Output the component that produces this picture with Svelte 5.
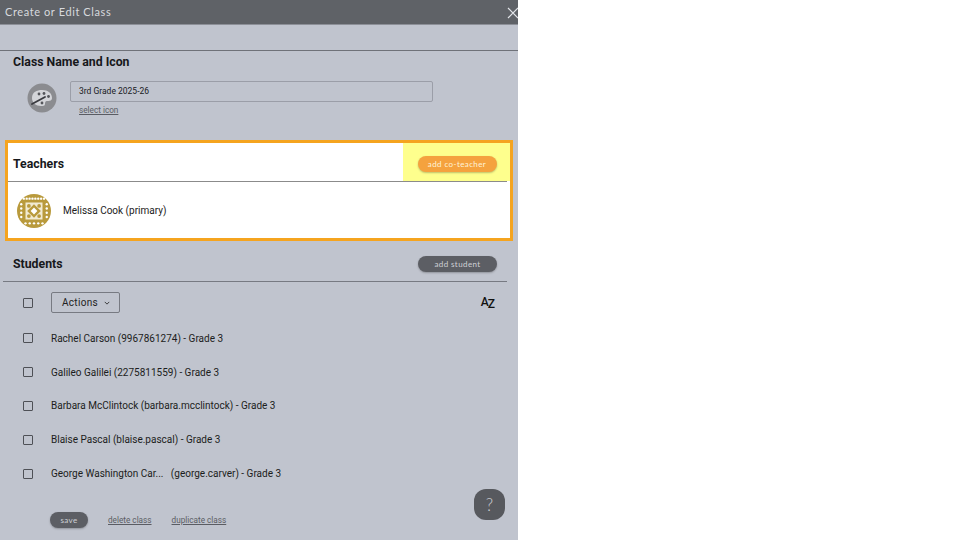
<script>
	const students = [
		'Rachel Carson (9967861274) - Grade 3',
		'Galileo Galilei (2275811559) - Grade 3',
		'Barbara McClintock (barbara.mcclintock) - Grade 3',
		'Blaise Pascal (blaise.pascal) - Grade 3',
		'George Washington Car...\u00a0\u00a0 (george.carver) - Grade 3'
	];

	// teacher avatar pattern: lattice in the middle, dots round it
	const cells = [];
	for (const y of [14, 26]) {
		for (const x of [14, 26]) cells.push({ x, y });
	}
	const dots = [];
	for (let x = 8; x <= 32; x += 3.4) {
		dots.push({ x, y: 5.5 });
	}
	for (const y of [12, 17, 22, 27]) {
		dots.push({ x: 5, y }, { x: 35, y });
	}
	for (let x = 10; x <= 30; x += 5) {
		dots.push({ x, y: 34.5 });
	}
</script>

<div class="panel">
	<header class="titlebar">
		<span class="title">Create or Edit Class</span>
		<svg class="close" viewBox="0 0 12 12" width="12" height="12">
			<path d="M1 1 L11 11 M11 1 L1 11" stroke="#e4e6ea" stroke-width="1.2" fill="none" />
		</svg>
	</header>

	<div class="tabs"></div>

	<section class="name-section">
		<h2>Class Name and Icon</h2>
		<div class="name-row">
			<div class="icon-circle">
				<svg viewBox="0 0 30 30" width="30" height="30">
					<circle cx="15" cy="15" r="14.5" fill="#8b8c90" />
					<path d="M5 15 C5 9 10 7 15 7 C21 7 25 10 25 15 C25 18 22 18 20 18 C18 18 18 20 18 21 C18 23 16 23 14 23 C9 23 5 20 5 15 Z" fill="#d4d5d9" />
					<circle cx="12" cy="11" r="1.4" fill="#55565b" />
					<circle cx="17" cy="10.5" r="1.4" fill="#55565b" />
					<circle cx="21.5" cy="13.5" r="1.4" fill="#55565b" />
					<circle cx="15" cy="20" r="1.4" fill="#55565b" />
					<path d="M5 21 L18 14" stroke="#3a3b40" stroke-width="1.8" stroke-linecap="round" />
				</svg>
			</div>
			<div class="name-fields">
				<div class="name-input">3rd Grade 2025-26</div>
				<span class="link">select icon</span>
			</div>
		</div>
	</section>

	<section class="teachers">
		<div class="teachers-head">
			<h2>Teachers</h2>
			<div class="spot">
				<button class="pill orange">add co-teacher</button>
			</div>
		</div>
		<div class="teacher-row">
			<svg class="avatar" viewBox="0 0 40 40" width="34" height="34">
				<circle cx="20" cy="20" r="20" fill="#b99a3c" />
				<rect x="10" y="10" width="20" height="20" fill="#f1ead2" />
				<path d="M20 12 L28 20 L20 28 L12 20 Z" fill="#b99a3c" />
				<path d="M20 16 L24 20 L20 24 L16 20 Z" fill="#fff" />
				{#each cells as c}
					<circle cx={c.x} cy={c.y} r="2.2" fill="#b99a3c" />
				{/each}
				{#each dots as d}
					<circle cx={d.x} cy={d.y} r="1.4" fill="#fff" />
				{/each}
			</svg>
			<span>Melissa Cook (primary)</span>
		</div>
	</section>

	<section class="students">
		<div class="students-head">
			<h2>Students</h2>
			<button class="pill dark">add student</button>
		</div>

		<div class="actions-row">
			<span class="check"></span>
			<button class="actions">
				Actions
				<svg viewBox="0 0 8 5" width="6" height="4">
					<path d="M1 1 L4 4 L7 1" stroke="#222" stroke-width="1.1" fill="none" />
				</svg>
			</button>
			<span class="sort"><span class="sort-a">A</span><span class="sort-z">Z</span></span>
		</div>

		<ul class="student-list">
			{#each students as name}
				<li>
					<span class="check"></span>
					<span>{name}</span>
				</li>
			{/each}
		</ul>
	</section>

	<footer class="actions-foot">
		<button class="pill dark save">save</button>
		<span class="link">delete class</span>
		<span class="link">duplicate class</span>
	</footer>

	<div class="help">?</div>
</div>

<style>
	:global(body) {
		margin: 0;
		background: #fff;
	}

	.panel {
		position: relative;
		width: 518px;
		height: 540px;
		overflow: hidden;
		background: #c0c4ce;
		font-family: Roboto, 'Liberation Sans', sans-serif;
		color: #1c1d20;
		font-size: 10px;
	}

	h2 {
		margin: 0;
		font-size: 12.3px;
		font-weight: 700;
		color: #17181b;
	}

	.titlebar {
		display: flex;
		align-items: center;
		justify-content: space-between;
		height: 24px;
		padding: 0 0 0 5px;
		background: #5f6267;
		border-bottom: 1px solid #8d9098;
	}

	.title {
		margin-top: -2px;
		font-family: Lato, sans-serif;
		font-size: 11px;
		letter-spacing: 0.6px;
		color: #d8dade;
	}

	.close {
		margin-right: -1px;
		margin-top: 2px;
	}

	.tabs {
		height: 25px;
		border-bottom: 1px solid #6f7279;
	}

	.name-section {
		box-sizing: border-box;
		height: 89px;
		padding: 4px 0 0 13px;
	}

	.name-row {
		display: flex;
		align-items: flex-start;
		margin-top: 12px;
	}

	.icon-circle {
		margin: 2px 0 0 14px;
		height: 30px;
	}

	.name-fields {
		margin-left: 13px;
	}

	.name-input {
		box-sizing: border-box;
		width: 363px;
		height: 21px;
		padding: 0 8px;
		line-height: 19px;
		font-size: 8.5px;
		color: #1a1b1e;
		border: 1px solid #9b9ea8;
		border-radius: 2px;
	}

	.link {
		font-size: 8.2px;
		color: #5a5c63;
		text-decoration: underline;
	}

	.name-fields .link {
		display: block;
		margin: 3px 0 0 9px;
	}

	.teachers {
		box-sizing: border-box;
		height: 101px;
		margin: 0 5px;
		background: #fff;
		border: 3px solid #f5a41f;
	}

	.teachers-head {
		display: flex;
		align-items: center;
		justify-content: space-between;
		box-sizing: border-box;
		height: 39px;
		margin-right: 3px;
		padding-left: 5px;
		border-bottom: 1px solid #8b8b8b;
	}

	.teachers-head h2 {
		margin-top: 4px;
	}

	.spot {
		display: flex;
		align-items: center;
		justify-content: center;
		align-self: stretch;
		box-sizing: border-box;
		width: 107px;
		margin-right: -3px;
		padding: 4px 0 0 1px;
		background: #feff8d;
	}

	.teacher-row {
		display: flex;
		align-items: center;
		gap: 12px;
		height: 57px;
		padding-left: 9px;
		color: #222;
	}

	.pill {
		height: 16px;
		padding: 0;
		border: none;
		border-radius: 8px;
		font-family: Lato, sans-serif;
		font-size: 8px;
		letter-spacing: 0.4px;
		box-shadow: 0 1px 2px rgba(0, 0, 0, 0.25);
	}

	.orange {
		width: 79px;
		background: #f5a23e;
		color: #fff3d8;
	}

	.dark {
		width: 79px;
		background: #5c5e64;
		color: #cfd1d6;
	}

	.students-head {
		display: flex;
		align-items: center;
		justify-content: space-between;
		box-sizing: border-box;
		height: 41px;
		margin: 0 11px 0 3px;
		padding: 6px 10px 0 10px;
		border-bottom: 1px solid #777a82;
	}

	.students-head h2 {
		margin-top: -1px;
	}

	.actions-row {
		display: flex;
		align-items: center;
		box-sizing: border-box;
		height: 39.5px;
		padding: 1.5px 23px 0;
	}

	.actions {
		display: flex;
		align-items: center;
		gap: 6px;
		box-sizing: border-box;
		width: 69px;
		height: 21px;
		margin-left: 18px;
		padding: 0 0 0 10px;
		background: none;
		border: 1px solid #777a82;
		border-radius: 2px;
		font-family: inherit;
		font-size: 10px;
		letter-spacing: 0.3px;
		color: #222;
	}

	.sort {
		display: flex;
		margin-left: auto;
		font-size: 12px;
		font-weight: 500;
		color: #111;
	}

	.sort-a {
		position: relative;
		top: -1px;
	}

	.sort-z {
		position: relative;
		top: 1px;
		margin-left: -1px;
	}

	.check {
		flex: none;
		box-sizing: border-box;
		width: 10px;
		height: 10px;
		border: 1.2px solid #4e5056;
		border-radius: 1px;
	}

	.student-list {
		margin: 0;
		padding: 0;
		list-style: none;
	}

	.student-list li {
		display: flex;
		align-items: center;
		gap: 18px;
		height: 33.8px;
		padding-left: 23px;
	}

	.actions-foot {
		display: flex;
		align-items: center;
		gap: 20px;
		margin-top: 21.5px;
		padding-left: 50px;
	}

	.save {
		width: 38px;
	}

	.help {
		position: absolute;
		left: 474px;
		top: 489px;
		width: 31px;
		height: 31px;
		border-radius: 12px;
		background: #57595e;
		color: #c9cbd0;
		font-family: Lato, sans-serif;
		font-size: 17px;
		font-weight: 300;
		line-height: 31px;
		text-align: center;
	}
</style>
